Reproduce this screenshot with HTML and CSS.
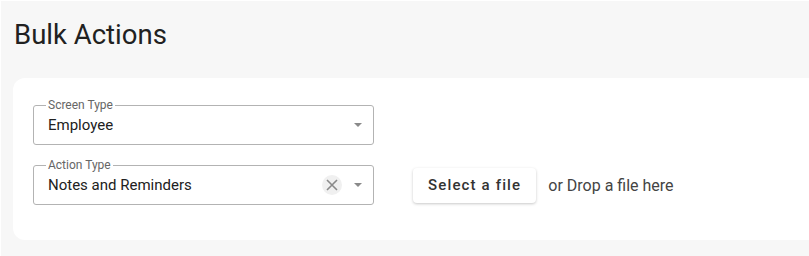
FILE: index.html
```html
<!DOCTYPE html>
<html>
<head>
  <meta charset="UTF-8">
  <title>Bulk Actions</title>
  <link rel="stylesheet" href="styles.css">
</head>
<body>
<div class="page">
  <h1>Bulk Actions</h1>
  <div class="card">
    <div class="row">
      <div class="field">
        <label class="field-label">Screen Type</label>
        <span class="field-value">Employee</span>
        <span class="arrow"></span>
      </div>
    </div>
    <div class="row">
      <div class="field">
        <label class="field-label">Action Type</label>
        <span class="field-value">Notes and Reminders</span>
        <span class="clear">
          <svg width="12" height="12" viewBox="0 0 12 12">
            <path d="M1 1 L11 11 M11 1 L1 11" stroke="#8a8a8a" stroke-width="1.6" fill="none"/>
          </svg>
        </span>
        <span class="arrow"></span>
      </div>
      <button class="file-btn" type="button">Select a file</button>
      <span class="drop-text">or Drop a file here</span>
    </div>
  </div>
</div>
</body>
</html>
```

FILE: styles.css
```css
body {
  margin: 0;
  background-color: #fff;
  font-family: Roboto, "Liberation Sans", sans-serif;
  overflow: hidden;
}

.page {
  margin: 1px 0 0 1px;
  height: 255px;
  background-color: #f7f7f7;
  padding-left: 12px;
  box-sizing: border-box;
}

h1 {
  margin: 0;
  padding-top: 18px;
  font-size: 27.5px;
  font-weight: 400;
  line-height: 32px;
  color: #212121;
  padding-left: 1px;
}

.card {
  margin-top: 27px;
  margin-right: -20px;
  background-color: #fff;
  border-radius: 12px;
  padding: 27px 0 35px 20px;
  display: flex;
  flex-direction: column;
  gap: 20px;
}

.row {
  display: flex;
  align-items: center;
}

.field {
  position: relative;
  width: 341px;
  height: 40px;
  box-sizing: border-box;
  border: 1px solid #b3b3b3;
  border-radius: 3px;
  display: flex;
  align-items: center;
  padding-left: 14px;
}

.field-label {
  position: absolute;
  top: -8px;
  left: 12px;
  padding: 0 2px;
  background-color: #fff;
  font-size: 12px;
  line-height: 14px;
  color: #666;
}

.field-value {
  flex: 1;
  font-size: 15px;
  color: #212121;
}

.clear {
  width: 20px;
  height: 20px;
  border-radius: 50%;
  background-color: #f0f0f0;
  display: flex;
  align-items: center;
  justify-content: center;
  margin-right: 12px;
}

.arrow {
  width: 0;
  height: 0;
  border-left: 4px solid transparent;
  border-right: 4px solid transparent;
  border-top: 4px solid #8a8a8a;
  margin-right: 11px;
}

.file-btn {
  margin-left: 39px;
  height: 35px;
  padding: 0 15px;
  border: none;
  border-radius: 4px;
  background-color: #fff;
  box-shadow: 0 1px 3px rgba(0, 0, 0, 0.22);
  font-family: Roboto, "Liberation Sans", sans-serif;
  font-size: 15px;
  font-weight: 500;
  letter-spacing: 1.15px;
  color: #333;
  cursor: pointer;
}

.drop-text {
  margin-left: 12px;
  font-size: 16px;
  color: #444;
}
```
